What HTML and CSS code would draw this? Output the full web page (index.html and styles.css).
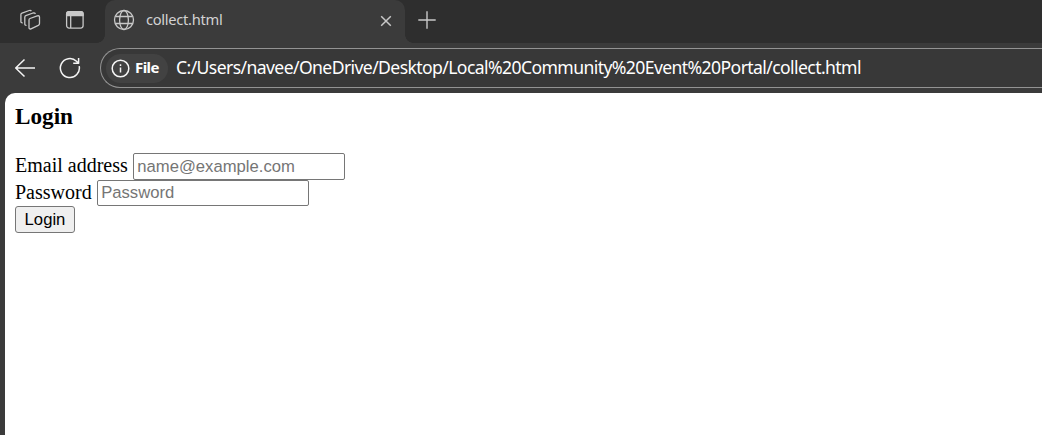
FILE: index.html
```
<!DOCTYPE html>
<html lang="en">
<head>
<meta charset="utf-8">
<title>collect.html</title>
<link rel="stylesheet" href="styles.css">
</head>
<body>
<div class="browser">
  <header class="tabstrip">
    <svg class="icon workspaces" width="22" height="22" viewBox="0 0 22 22"><path d="M10 9.500 17.200 6.900q2.300-.6 2.300 1.300V14.500q0 1.300-1.200 1.900L11 19.800Q9 20.500 9 18.500V11Q9 9.900 10 9.500ZM6.500 16.300Q4.800 16.500 4.800 15V8.200Q4.800 7 5.800 6.600L13 4Q14.800 3.500 15.400 4.900M2.700 13.800Q.9 14 .9 12.400V5.600Q.9 4.500 2 4.100L9.200 1.500Q10.700 1 11.400 2.100"/></svg>
    <svg class="icon tabmenu" width="20" height="20" viewBox="0 0 20 20"><rect x="1.600" y="1.600" width="16.500" height="16.500" rx="2.500"/><path class="fill" d="M1.600 5.500V4q0-2.400 2.400-2.400h11.700q2.400 0 2.400 2.400v1.500Z"/><path d="M5.700 6v12"/></svg>
    <div class="tab">
      <svg class="icon globe" width="22" height="22" viewBox="0 0 22 22"><circle cx="11" cy="11" r="9.500"/><ellipse cx="11" cy="11" rx="4.400" ry="9.500"/><path d="M2.400 7.500h17.200M2.400 14.500h17.200"/></svg>
      <span class="tab-title">collect.html</span>
      <svg class="icon close" width="12" height="12" viewBox="0 0 12 12"><path d="m1.200 1.200 9.600 9.600M10.800 1.200 1.200 10.800"/></svg>
    </div>
    <svg class="icon newtab" width="18" height="18" viewBox="0 0 18 18"><path d="M9 .3v17.400M.3 9h17.400"/></svg>
  </header>
  <div class="toolbar">
    <svg class="icon nav back" width="22" height="20" viewBox="0 0 22 20"><path d="M10.500 1.500 1.700 10l8.800 8.500M1.700 10H21"/></svg>
    <svg class="icon nav reload" width="22" height="22" viewBox="0 0 22 22"><path d="M20.200 9.200A9.500 9.500 0 1 1 17.500 4.200L19.500 6.200M19.600.9v5.400h-5.400"/></svg>
    <div class="address">
      <div class="chip">
        <svg class="icon nav" width="19" height="19" viewBox="0 0 19 19"><circle cx="9.500" cy="9.500" r="8.300"/><path d="M9.500 8.600v5M9.500 5.300v1.600"/></svg>
        <span class="chip-label">File</span>
      </div>
      <span class="url">C:/Users/navee/OneDrive/Desktop/Local%20Community%20Event%20Portal/collect.html</span>
    </div>
  </div>
  <main class="page">
    <h3>Login</h3>
    <form>
      <div class="row"><label for="email">Email address</label><input class="field" id="email" type="email" placeholder="name@example.com"></div>
      <div class="row"><label for="password">Password</label><input class="field short" id="password" type="password" placeholder="Password"></div>
      <button class="submit" type="button">Login</button>
    </form>
  </main>
</div>
</body>
</html>
```
FILE: styles.css
```
* { box-sizing: border-box; }
body { margin: 0; overflow: hidden; background: #3b3b3b; }
.browser { width: 1042px; height: 435px; display: flex; flex-direction: column; font-family: "Noto Sans", "Open Sans", sans-serif; }
.icon { flex: none; display: block; fill: none; stroke: #c8c8c8; stroke-width: 1.3; stroke-linejoin: round; }
.icon .fill { fill: #c8c8c8; }
.tabstrip { height: 43px; flex: none; display: flex; align-items: flex-start; background: #2e2e2e; }
.workspaces { margin: 9px 0 0 20px; }
.tabmenu { margin: 10px 0 0 23px; }
.tab { position: relative; width: 300px; height: 43px; margin-left: 20px; padding-left: 8px; display: flex; align-items: flex-start; background: #3b3b3b; border-radius: 10px 10px 0 0; }
.tab::before, .tab::after { content: ""; position: absolute; bottom: 0; width: 8px; height: 8px; }
.tab::before { left: -8px; background: radial-gradient(circle at 0 0, #2e2e2e 7.5px, #3b3b3b 8px); }
.tab::after { right: -8px; background: radial-gradient(circle at 100% 0, #2e2e2e 7.5px, #3b3b3b 8px); }
.globe { margin-top: 9px; }
.tab-title { width: 233.500px; margin: 9px 0 0 11px; font-size: 14.700px; line-height: 20px; letter-spacing: -.3px; color: #d2d2d2; white-space: nowrap; }
.close { margin-top: 15px; stroke-width: 1.5; }
.newtab { margin: 10.500px 0 0 13px; stroke-width: 1.4; }
.toolbar { height: 50px; flex: none; display: flex; align-items: flex-start; }
.nav { stroke: #f4f4f4; stroke-width: 1.5; }
.back { margin: 15px 0 0 14px; }
.reload { margin: 14px 0 0 23px; }
.address { flex: 1; height: 40px; margin: 5px 0 0 19px; display: flex; align-items: center; border: 1.300px solid #939393; border-right: 0; border-radius: 20px 0 0 20px; background: #383838; }
.chip { width: 62px; height: 29px; margin-left: 5px; padding-left: 5px; display: flex; align-items: center; border-radius: 15px; background: #424242; }
.chip-label { margin: -2px 0 0 5px; font-size: 15px; font-weight: 700; line-height: 20px; letter-spacing: -.6px; color: #fff; }
.url { margin: -2px 0 0 8px; font-size: 17.600px; line-height: 24px; color: #fff; white-space: nowrap; letter-spacing: -.6px; }
.page { flex: 1; margin-left: 5px; padding: 10px 10px 0; background: #fff; border-top-left-radius: 10px; font-family: "Liberation Serif", "Times New Roman", serif; font-size: 20px; color: #000; }
h3 { margin: 0; height: 50px; font-size: 23.200px; line-height: 27px; }
.row { display: flex; align-items: flex-start; gap: 5px; height: 27px; }
.row label { line-height: 25px; }
.field { width: 212px; height: 27px; margin: 0; padding: 1px 3px 1px 3.500px; border: 1px solid #767676; border-radius: 2px; font: 16.670px "Liberation Sans", Arial, sans-serif; }
.short { height: 26px; }
.field::placeholder { color: #757575; }
.submit { display: block; width: 60px; height: 27px; margin-top: -1px; padding: 0; border: 1px solid #767676; border-radius: 3px; background: #efefef; color: #000; font: 16.670px "Liberation Sans", Arial, sans-serif; }
```
